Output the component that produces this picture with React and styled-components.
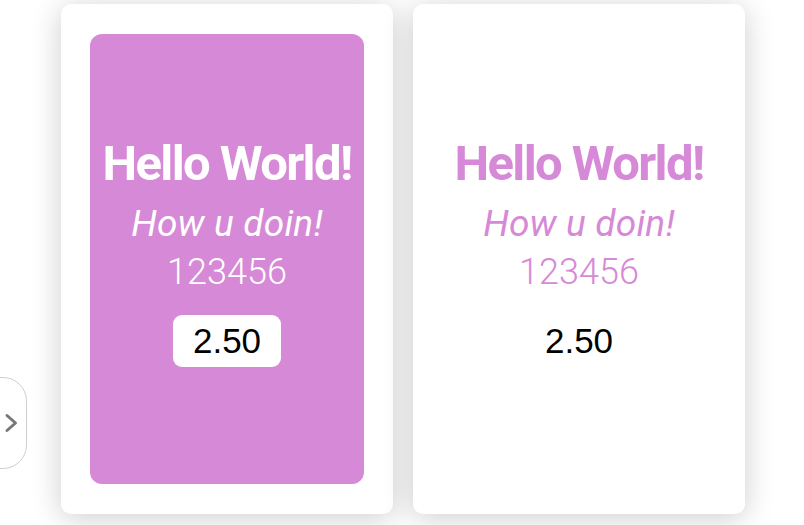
import React from "react";
import styled, { createGlobalStyle } from "styled-components";

const GlobalStyle = createGlobalStyle`
  html, body {
    margin: 0;
    padding: 0;
    background: #ffffff;
    overflow: hidden;
  }
  body {
    font-family: Roboto, "Liberation Sans", sans-serif;
  }
`;

const PURPLE = "#d689d6";

const Stage = styled.div`
  position: relative;
  width: 804px;
  height: 525px;
  overflow: hidden;
`;

const Track = styled.div`
  display: flex;
  gap: 20px;
  padding: 4px 0 0 61px;
`;

const Card = styled.div`
  width: 332px;
  height: 510px;
  box-sizing: border-box;
  padding: 30px 29px;
  background: #ffffff;
  border-radius: 10px;
  box-shadow: 0 4px 30px rgba(0, 0, 0, 0.2);
  display: flex;
`;

const Inner = styled.div`
  flex: 1;
  border-radius: 12px;
  background: ${(p) => (p.$filled ? PURPLE : "transparent")};
  color: ${(p) => (p.$filled ? "#ffffff" : PURPLE)};
  display: flex;
  flex-direction: column;
  align-items: center;
  justify-content: center;
  padding-bottom: 13px;
`;

const Title = styled.h1`
  margin: 0 0 5px;
  font-size: 49px;
  font-weight: 700;
  letter-spacing: -1.6px;
  line-height: 52px;
`;

const Subtitle = styled.div`
  margin-top: 6px;
  font-size: 37px;
  font-style: italic;
  font-weight: 400;
  letter-spacing: 0.2px;
  line-height: 46px;
`;

const Number = styled.div`
  font-size: 36px;
  font-weight: 300;
  line-height: 50px;
`;

const Price = styled.div`
  margin-top: 18px;
  padding: 0 20px;
  height: 52px;
  display: flex;
  align-items: center;
  border-radius: 9px;
  background: ${(p) => (p.$boxed ? "#ffffff" : "transparent")};
  color: #000000;
  font-family: "Liberation Sans", Arial, sans-serif;
  font-size: 35px;
`;

const ArrowButton = styled.button`
  position: absolute;
  left: -24px;
  top: 377px;
  width: 51px;
  height: 92px;
  border: 1px solid #cfcfcf;
  border-radius: 24px;
  background: #ffffff;
  padding: 0 0 0 24px;
  display: flex;
  align-items: center;
  justify-content: flex-start;
  cursor: pointer;
`;

function Chevron() {
  return (
    <svg width="22" height="26" viewBox="0 0 22 26">
      <path
        d="M6 5.5 L14.5 13 L6 20.5"
        fill="none"
        stroke="#777777"
        strokeWidth="3"
        strokeLinecap="round"
        strokeLinejoin="round"
      />
    </svg>
  );
}

function Slide({ filled }) {
  return (
    <Card>
      <Inner $filled={filled}>
        <Title>Hello World!</Title>
        <Subtitle>How u doin!</Subtitle>
        <Number>123456</Number>
        <Price $boxed={filled}>2.50</Price>
      </Inner>
    </Card>
  );
}

export default function App() {
  return (
    <Stage>
      <GlobalStyle />
      <Track>
        <Slide filled />
        <Slide />
      </Track>
      <ArrowButton aria-label="next">
        <Chevron />
      </ArrowButton>
    </Stage>
  );
}
